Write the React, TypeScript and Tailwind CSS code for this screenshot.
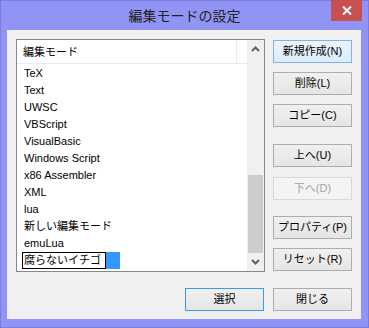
import React from "react";

const items = [
  "TeX",
  "Text",
  "UWSC",
  "VBScript",
  "VisualBasic",
  "Windows Script",
  "x86 Assembler",
  "XML",
  "lua",
  "新しい編集モード",
  "emuLua",
];

type BtnKind = "normal" | "hover" | "default" | "disabled";

function Btn({ label, kind = "normal", className = "" }: { label: string; kind?: BtnKind; className?: string }) {
  const styles: Record<BtnKind, string> = {
    normal: "border-[#adadad] bg-gradient-to-b from-[#f0f0f0] to-[#e5e5e5] text-black",
    hover: "border-[#7eb4ea] bg-gradient-to-b from-[#ecf4fc] to-[#dcecfc] text-black",
    default: "border-[#3c9be8] bg-gradient-to-b from-[#f0f0f0] to-[#e5e5e5] text-black",
    disabled: "border-[#d9d9d9] bg-[#f4f4f4] text-[#a3a3a3]",
  };
  return (
    <div
      className={`w-[79px] h-[23px] border flex items-center justify-center text-[11px] leading-none ${styles[kind]} ${className}`}
    >
      {label}
    </div>
  );
}

function Chevron({ up }: { up: boolean }) {
  return (
    <svg width="9" height="6" viewBox="0 0 9 6">
      <polyline
        points={up ? "1,5 4.5,1.5 8,5" : "1,1 4.5,4.5 8,1"}
        fill="none"
        stroke="#606060"
        strokeWidth="2"
      />
    </svg>
  );
}

export default function App() {
  return (
    <div className="w-[369px] h-[328px] bg-[#9194f5] border border-[#7a7cdd] flex flex-col font-['Liberation_Sans','Noto_Sans_CJK_JP',sans-serif] select-none">
      {/* title bar */}
      <div className="relative h-[29px] flex items-center justify-center">
        <span className="text-[14px] text-[#222] leading-none mt-[1px]">編集モードの設定</span>
        <div className="absolute right-[6px] top-[-1px] w-[31px] h-[21px] bg-[#c75050] flex items-center justify-center">
          <svg width="10" height="9" viewBox="0 0 10 9">
            <line x1="1" y1="0.5" x2="9" y2="8.5" stroke="white" strokeWidth="2" />
            <line x1="9" y1="0.5" x2="1" y2="8.5" stroke="white" strokeWidth="2" />
          </svg>
        </div>
      </div>

      {/* client area */}
      <div className="ml-[6px] w-[354px] h-[289px] bg-[#f0f0f0] px-[9px] pt-[9px] flex flex-col">
        <div className="flex gap-[8px]">
          {/* list view */}
          <div className="w-[249px] h-[233px] border border-[#828790] bg-white flex">
            <div className="w-[230px] flex flex-col">
              <div className="h-[24px] border-b border-[#e2ecf8] flex shrink-0">
                <div className="w-[220px] border-r border-[#e2ecf8] flex items-center pl-[6px] pt-[1px] text-[11px] text-black">
                  編集モード
                </div>
              </div>
              {items.map((it) => (
                <div key={it} className="h-[17px] flex items-center pl-[7px] pt-[1px] text-[11px] text-black leading-none shrink-0">
                  {it}
                </div>
              ))}
              <div className="h-[17px] flex items-start pl-[5px] pt-[1px] shrink-0">
                <div className="w-[84px] h-[17px] border border-black bg-white flex items-center pl-[1px] text-[11px] text-black leading-none">
                  腐らないイチゴ
                </div>
                <div className="w-[14px] h-[17px] bg-[#3399ff]" />
              </div>
            </div>
            {/* scrollbar */}
            <div className="w-[17px] bg-[#f0f0f0] flex flex-col">
              <div className="h-[17px] flex items-center justify-center">
                <Chevron up />
              </div>
              <div className="h-[118px]" />
              <div className="ml-[1px] w-[15px] h-[78px] bg-[#cdcdcd]" />
              <div className="flex-1 flex items-center justify-center">
                <Chevron up={false} />
              </div>
            </div>
          </div>

          {/* side buttons */}
          <div className="flex flex-col pt-[1px]">
            <Btn label="新規作成(N)" kind="hover" />
            <Btn label="削除(L)" className="mt-[9px]" />
            <Btn label="コピー(C)" className="mt-[9px]" />
            <Btn label="上へ(U)" className="mt-[17px]" />
            <Btn label="下へ(D)" kind="disabled" className="mt-[10px]" />
            <Btn label="プロパティ(P)" className="mt-[16px]" />
            <Btn label="リセット(R)" className="mt-[9px]" />
          </div>
        </div>

        {/* bottom buttons */}
        <div className="mt-[16px] flex justify-end gap-[9px]">
          <Btn label="選択" kind="default" />
          <Btn label="閉じる" />
        </div>
      </div>
    </div>
  );
}
